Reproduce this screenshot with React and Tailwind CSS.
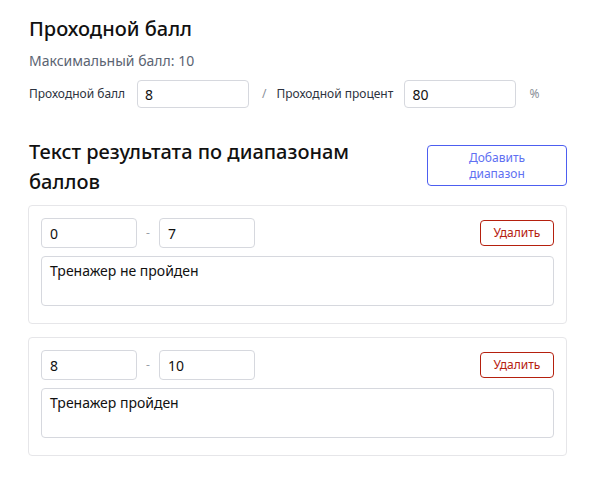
export default function App() {
  const ranges = [
    { from: "0", to: "7", text: "Тренажер не пройден" },
    { from: "8", to: "10", text: "Тренажер пройден" },
  ];
  return (
    <div className="w-[590px] h-[479px] bg-white text-[#111] pl-[29px] pr-[23px] pt-[16px]" style={{ fontFamily: "'Noto Sans', sans-serif" }}>
      <h1 className="text-[20px] leading-[26px] font-medium text-[#111]">Проходной балл</h1>
      <div className="mt-[9px] text-[14px] leading-[20px] text-[#5b6472]">Максимальный балл: 10</div>
      <div className="mt-[9px] flex items-center h-[28px]">
        <span className="text-[12px] text-[#2d3340] w-[108px]">Проходной балл</span>
        <div className="w-[112px] h-[28px] border border-[#d6d8de] rounded-[4px] px-[7px] flex items-center text-[14px]">8</div>
        <span className="ml-[13px] text-[12px] text-[#8a8f99]">/</span>
        <span className="ml-[10px] text-[12px] text-[#2d3340] w-[128px]">Проходной процент</span>
        <div className="w-[112px] h-[28px] border border-[#d6d8de] rounded-[4px] px-[7px] flex items-center text-[14px]">80</div>
        <span className="ml-[13px] text-[12px] text-[#8a8f99]">%</span>
      </div>
      <div className="mt-[24px] flex items-start justify-between">
        <h2 className="mt-[5px] text-[20px] leading-[30px] font-medium w-[360px]">Текст результата по диапазонам баллов</h2>
        <button className="mt-[13px] w-[140px] h-[41px] border border-[#4d5ef0] rounded-[4px] text-[12px] leading-[16px] text-[#6070f2]">Добавить<br />диапазон</button>
      </div>
      <div className="mt-[8px] flex flex-col gap-[13px] -ml-[1px]">
        {ranges.map((r, i) => (
          <div key={i} className="border border-[#e6e6e9] rounded-[4px] px-[12px] pt-[12px] pb-[17px]">
            <div className="flex items-center">
              <div className="w-[96px] h-[30px] border border-[#d6d8de] rounded-[4px] px-[8px] flex items-center text-[14px]">{r.from}</div>
              <span className="w-[22px] text-center text-[12px] text-[#9a9fa8]">-</span>
              <div className="w-[96px] h-[30px] border border-[#d6d8de] rounded-[4px] px-[8px] flex items-center text-[14px]">{r.to}</div>
              <button className="ml-auto w-[74px] h-[26px] border border-[#b5200e] rounded-[4px] text-[12px] text-[#b5200e]">Удалить</button>
            </div>
            <div className="mt-[8px] h-[50px] border border-[#d6d8de] rounded-[4px] px-[8px] pt-[4px] text-[14px] leading-[20px]">{r.text}</div>
          </div>
        ))}
      </div>
    </div>
  );
}
